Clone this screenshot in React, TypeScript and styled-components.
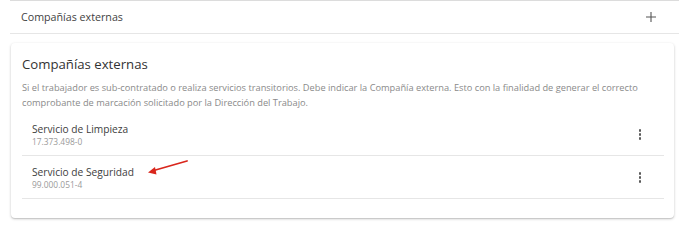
import * as React from 'react';
import styled, {createGlobalStyle} from "styled-components";

const GlobalStyle = createGlobalStyle`
  body {
    margin: 0;
    background: #ffffff;
    font-family: "Open Sans", "Liberation Sans", sans-serif;
  }
`

const Page = styled.div`
  position: relative;
  width: 688px;
  height: 229px;
  overflow: hidden;
`

const SectionHeader = styled.div`
  display: flex;
  justify-content: space-between;
  align-items: center;

  height: 32px;
  margin: 0 9px 0 10px;
  padding: 0 22px 0 11px;

  border-top: 1px solid #dcdcdc;
  border-bottom: 1px solid #e6e6e6;
`

const HeaderLabel = styled.span`
  font-size: 10.7px;
  color: #3f3f3f;
`

const PlusIcon = styled.svg`
  width: 12px;
  height: 12px;
`

const Card = styled.div`
  margin: 9px 14px 0 11px;
  padding: 12px 10px 19px 11px;

  border-radius: 4px;
  background: #fff;
  box-shadow: 0 1px 3px rgba(0, 0, 0, 0.2), 0 1px 1px rgba(0, 0, 0, 0.1);
`

const Title = styled.div`
  font-size: 13.2px;
  line-height: 18px;
  color: #333;
`

const Description = styled.p`
  margin: 7px 0 3px;
  font-size: 9.25px;
  line-height: 15px;
  color: #8a8a8a;
`

const List = styled.div`
  display: flex;
  flex-direction: column;
`

const Item = styled.div`
  display: flex;
  justify-content: space-between;
  align-items: center;

  padding: 9px 12px 8px 10px;
  border-bottom: 1px solid #e6e6e6;
`

const ItemText = styled.div`
  display: flex;
  flex-direction: column;
`

const ItemName = styled.span`
  font-size: 10.2px;
  line-height: 14px;
  color: #3d3d3d;
`

const ItemRut = styled.span`
  font-size: 8.4px;
  line-height: 11px;
  color: #9a9a9a;
`

const MenuButton = styled.div`
  display: flex;
  flex-direction: column;
  align-items: center;
  justify-content: center;
  gap: 1.6px;

  width: 24px;
  height: 24px;
`

const Dot = styled.span`
  width: 2.4px;
  height: 2.4px;
  border-radius: 50%;
  background: #5a5a5a;
`

const Arrow = styled.svg`
  position: absolute;
  left: 140px;
  top: 155px;
  width: 52px;
  height: 24px;
`

const companies = [
    {name: "Servicio de Limpieza", rut: "17.373.498-0"},
    {name: "Servicio de Seguridad", rut: "99.000.051-4"},
]

export default function App() {
    return (
        <Page>
            <GlobalStyle/>
            <SectionHeader>
                <HeaderLabel>Compañías externas</HeaderLabel>
                <PlusIcon viewBox="0 0 12 12">
                    <path d="M6 1v10M1 6h10" stroke="#555" strokeWidth="1.1" fill="none"/>
                </PlusIcon>
            </SectionHeader>
            <Card>
                <Title>Compañías externas</Title>
                <Description>
                    Si el trabajador es sub-contratado o realiza servicios transitorios. Debe indicar la Compañía
                    externa. Esto con la finalidad de generar el correcto comprobante de marcación solicitado por la
                    Dirección del Trabajo.
                </Description>
                <List>
                    {companies.map(c => (
                        <Item key={c.rut}>
                            <ItemText>
                                <ItemName>{c.name}</ItemName>
                                <ItemRut>{c.rut}</ItemRut>
                            </ItemText>
                            <MenuButton>
                                <Dot/><Dot/><Dot/>
                            </MenuButton>
                        </Item>
                    ))}
                </List>
            </Card>
            <Arrow viewBox="0 0 52 24">
                <path d="M47 6 L12 16" stroke="#d9261c" strokeWidth="1.8" fill="none" strokeLinecap="round"/>
                <path d="M8 17.5 L15 12 L16.5 19.5 Z" fill="#d9261c"/>
            </Arrow>
        </Page>
    );
}
